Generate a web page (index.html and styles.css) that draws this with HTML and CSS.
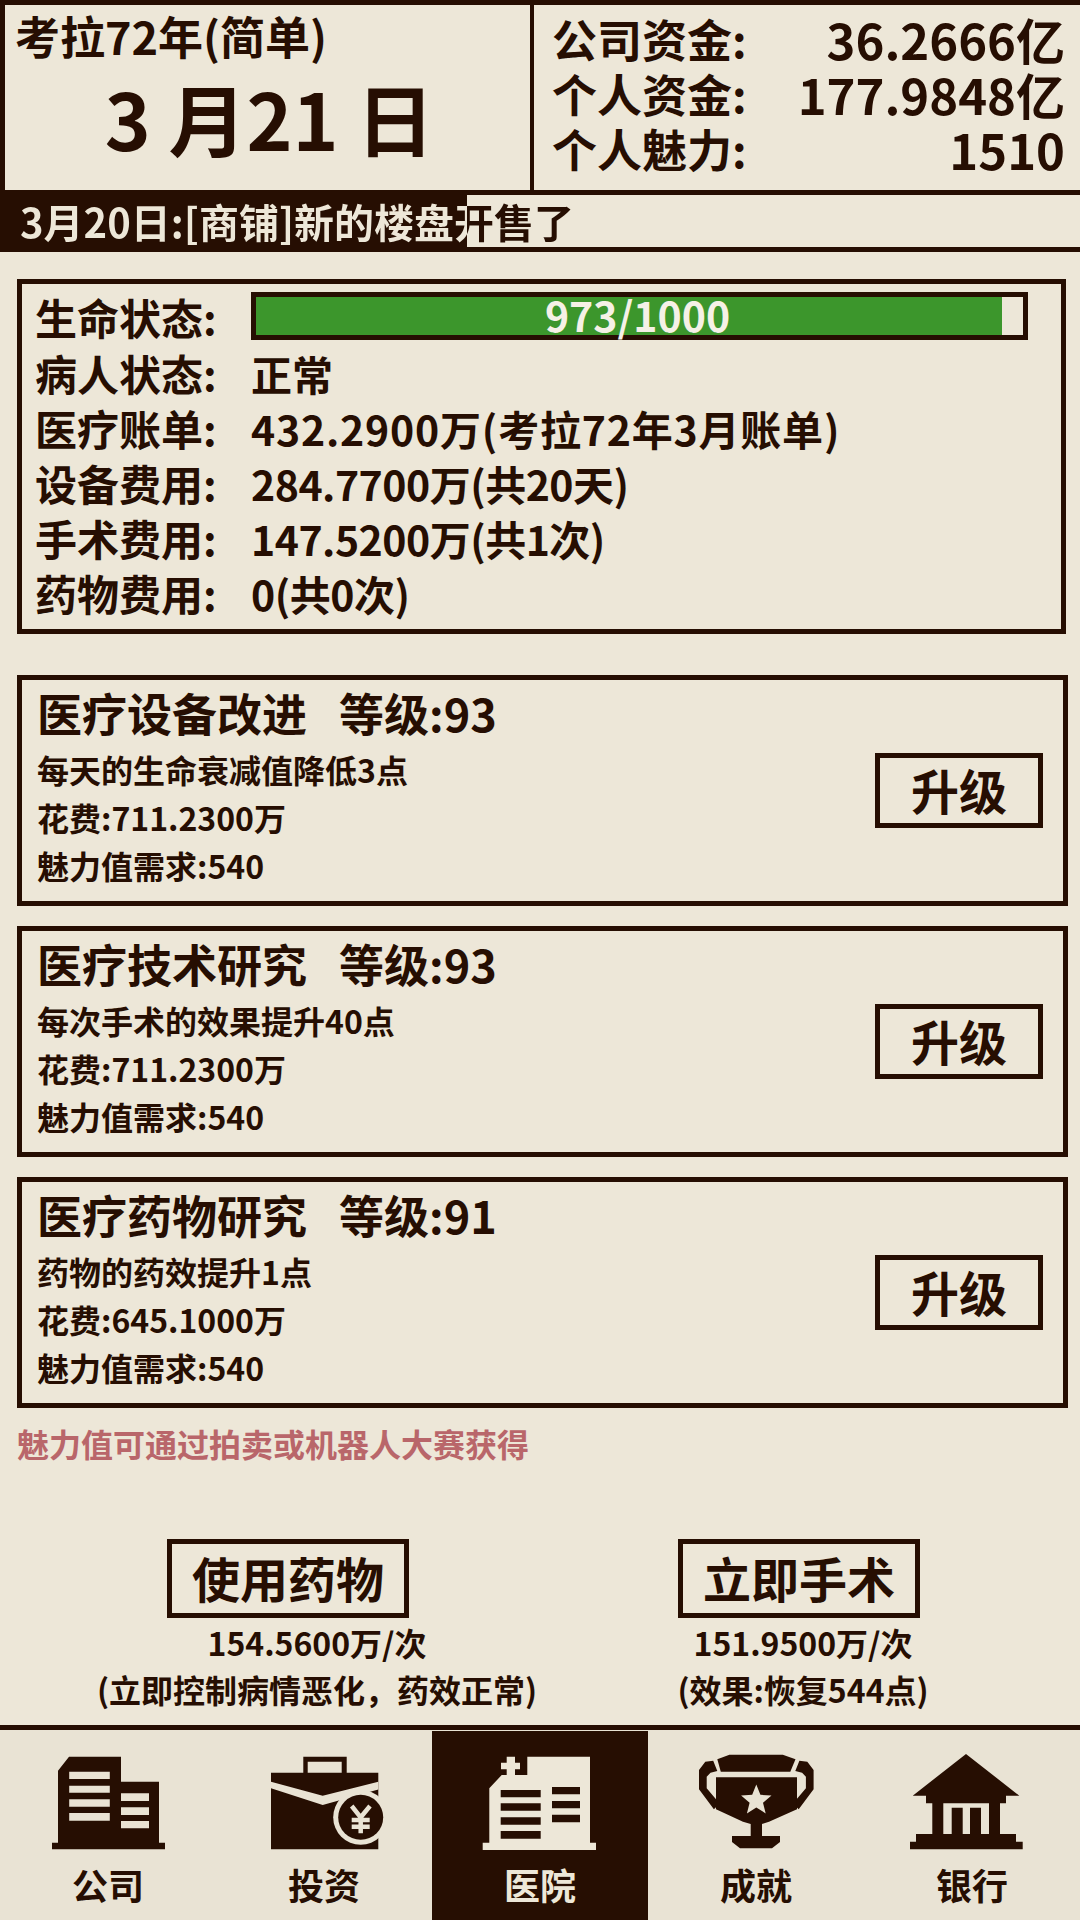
FILE: index.html
```html
<!DOCTYPE html>
<html lang="zh">
<head>
<meta charset="utf-8">
<title>医院</title>
<link rel="stylesheet" href="styles.css">
</head>
<body>
<div class="page">
  <header class="top">
    <div class="date-box">
      <div class="era">考拉72年(简单)</div>
      <div class="date">3 月21 日</div>
    </div>
    <div class="funds">
      <div class="fund"><span>公司资金:</span><span class="amount">36.2666亿</span></div>
      <div class="fund"><span>个人资金:</span><span class="amount">177.9848亿</span></div>
      <div class="fund"><span>个人魅力:</span><span class="amount">1510</span></div>
    </div>
  </header>
  <div class="ticker">
    <div class="ticker-text">3月20日:[商铺]新的楼盘开售了</div>
  </div>
  <section class="status">
    <div class="row"><span class="label">生命状态:</span>
      <div class="bar"><div class="bar-fill" style="width:97.3%"></div><span class="bar-text">973/1000</span></div></div>
    <div class="row"><span class="label">病人状态:</span><span>正常</span></div>
    <div class="row"><span class="label">医疗账单:</span><span class="wide">432.2900万(考拉72年3月账单)</span></div>
    <div class="row"><span class="label">设备费用:</span><span class="tight">284.7700万(共20天)</span></div>
    <div class="row"><span class="label">手术费用:</span><span class="tight">147.5200万(共1次)</span></div>
    <div class="row"><span class="label">药物费用:</span><span class="tight">0(共0次)</span></div>
  </section>
  <section class="cards">
    <article class="card">
      <div class="card-body">
        <h2 class="card-title"><span>医疗设备改进</span><span>等级:93</span></h2>
        <p>每天的生命衰减值降低3点</p><p>花费:711.2300万</p><p>魅力值需求:540</p>
      </div>
      <div class="btn btn-up">升级</div>
    </article>
    <article class="card">
      <div class="card-body">
        <h2 class="card-title"><span>医疗技术研究</span><span>等级:93</span></h2>
        <p>每次手术的效果提升40点</p><p>花费:711.2300万</p><p>魅力值需求:540</p>
      </div>
      <div class="btn btn-up">升级</div>
    </article>
    <article class="card">
      <div class="card-body">
        <h2 class="card-title"><span>医疗药物研究</span><span>等级:91</span></h2>
        <p>药物的药效提升1点</p><p>花费:645.1000万</p><p>魅力值需求:540</p>
      </div>
      <div class="btn btn-up">升级</div>
    </article>
  </section>
  <p class="note">魅力值可通过拍卖或机器人大赛获得</p>
  <section class="actions">
    <div class="action action-left">
      <div class="btn btn-act">使用药物</div>
      <p>154.5600万/次</p>
      <p>(立即控制病情恶化，药效正常)</p>
    </div>
    <div class="action action-right">
      <div class="btn btn-act">立即手术</div>
      <p>151.9500万/次</p>
      <p>(效果:恢复544点)</p>
    </div>
  </section>
  <nav class="nav">
    <div class="tab">
      <svg class="icon" viewBox="-6 0 132 100">
        <path fill-rule="evenodd" d="M4 92.7H10V20.7L21 6.7H73V31.7H111V92.7H117V99.3H4ZM21.2 21.7V29H61.8V21.7ZM21.2 35.7V42.7H61.8V35.7ZM21.2 49.3V56.7H61.8V49.3ZM21.2 63V70.7H61.8V63ZM73 43.3V51H101V43.3ZM73 57.3V65H101V57.3ZM73 71V78.3H101V71Z"/>
      </svg>
      <span>公司</span>
    </div>
    <div class="tab">
      <svg class="icon" viewBox="-6 0 132 100">
        <path fill-rule="evenodd" d="M39.3 22.7V6.7H82.7V22.7H114.3V99.3H7V22.7ZM43.7 11.7V22.7H77.7V11.7Z"/>
        <path class="cut" d="M7 31.7 58.7 45.7 114.3 31.7V39.5L58.7 55 7 38.3Z"/>
        <circle class="cut" cx="96.7" cy="67.3" r="27.5"/>
        <circle cx="96.7" cy="67.3" r="22.5"/>
        <path class="yen" d="M87.7 56 96.7 67.3 106 56M96.7 67.3V83.3M87.7 70H105.7M87.7 76.7H105.7"/>
      </svg>
      <span>投资</span>
    </div>
    <div class="tab tab-active">
      <svg class="icon" viewBox="-6 0 132 100">
        <path fill-rule="evenodd" d="M47.3 6.7H110V92.7H116V100H2.7V92.7H9.3V38.3L21.7 25H47.3ZM20.7 40V47.3H60.7V40ZM20.7 53.3V60.7H60.7V53.3ZM20.7 67.3V74.7H60.7V67.3ZM20.7 81V88.7H60.7V81ZM72 37V44.3H100V37ZM72 51V58.3H100V51ZM72 64.7V72.3H100V64.7Z"/>
        <path d="M26.7 6.7H35V12.7H40V19.3H35V26H26.7V19.3H21V12.7H26.7Z"/>
      </svg>
      <span>医院</span>
    </div>
    <div class="tab">
      <svg class="icon" viewBox="-6 0 132 100">
        <path d="M21.3 9.3 33.4 4.7H86.8L99.5 9.3 94.3 21.7H24.8Z"/>
        <path fill-rule="evenodd" d="M20 27.3H101V59.3L73 71.7 66 74V86H84V92L76 98.3H44L36 92V86H54.7V74L47 71.7 20 59.3ZM60.3 34.5 56.2 44.8 45.1 45.6 53.6 52.7 50.9 63.4 60.3 57.5 69.7 63.4 67 52.7 75.5 45.6 64.4 44.8Z"/>
        <path d="M9.3 11.7 17.2 10.7 21.3 21 14.5 22.7 10.7 26.7V38.3L20 49.3V57.3L17.9 59.3 3 39.3V20Z"/>
        <path d="M111.3 11.7 103.4 10.7 99.3 21 106.1 22.7 109.9 26.7V38.3L100.6 49.3V57.3L102.7 59.3 117.6 39.3V20Z"/>
      </svg>
      <span>成就</span>
    </div>
    <div class="tab">
      <svg class="icon" viewBox="-6 0 132 100">
        <path d="M54 4 107.3 45.7H94V53.3H88V84H104V91.7H110.7V99.3H-2V91.7H4V84H20.3V53.3H14V45.7H.7ZM31.3 53.3V84H39.7V57.7H50.7V84H58V57.7H69V84H77V53.3Z" fill-rule="evenodd"/>
      </svg>
      <span>银行</span>
    </div>
  </nav>
</div>
</body>
</html>
```

FILE: styles.css
```css
* { box-sizing: border-box; }
html, body { margin: 0; padding: 0; }
body {
  width: 1080px;
  height: 1920px;
  overflow: hidden;
  background: #ede7d8;
  color: #260e02;
  font-family: "Noto Sans CJK SC", "Noto Sans", sans-serif;
  font-weight: 700;
}
p, h2 { margin: 0; font: inherit; }

.page { height: 1920px; display: flex; flex-direction: column; }

.top {
  display: flex;
  height: 195px;
  border-top: 5px solid #260e02;
  border-bottom: 5px solid #260e02;
  border-left: 5px solid #260e02;
}
.date-box { width: 525px; padding-left: 10px; }
.era { font-size: 45px; line-height: 62px; }
.date { font-size: 78px; line-height: 100px; text-align: center; padding-right: 6px; }
.funds {
  flex: 1;
  border-left: 4px solid #260e02;
  padding: 6px 15px 0 18px;
}
.fund {
  display: flex;
  height: 55px;
  justify-content: space-between;
  align-items: center;
  font-size: 45px;
  line-height: 55px;
}
.amount { font-size: 49px; line-height: 55px; }

.ticker {
  height: 57px;
  border-bottom: 5px solid #260e02;
  background: linear-gradient(90deg, #260e02 467px, transparent 467px);
}
.ticker-text {
  font-size: 40px;
  line-height: 52px;
  padding-left: 20px;
  white-space: nowrap;
  background: linear-gradient(90deg, #ede7d8 467px, #260e02 467px);
  -webkit-background-clip: text;
  background-clip: text;
  color: transparent;
}

.status {
  margin: 27px 14px 0 17px;
  height: 355px;
  border: 5px solid #260e02;
  padding: 3px 0 0 13px;
  font-size: 41px;
}
.row { display: flex; align-items: center; height: 55px; }
.row:first-child { height: 58px; }
.label { width: 216px; flex: none; font-size: 42px; }
.wide { letter-spacing: .8px; }
.tight { letter-spacing: -.5px; }
.bar {
  position: relative;
  width: 777px;
  height: 48px;
  border: 5px solid #260e02;
  display: flex;
  align-items: center;
  justify-content: center;
}
.bar-fill { position: absolute; left: 0; top: 0; bottom: 0; background: #3c962c; }
.bar-text { position: relative; color: #f5f1e6; font-size: 41px; line-height: 38px; left: -2px; top: -2px; }

.cards {
  margin: 41px 12px 0 17px;
  display: flex;
  flex-direction: column;
  gap: 20px;
}
.card {
  height: 231px;
  border: 5px solid #260e02;
  padding: 1px 20px 0 15px;
  display: flex;
  justify-content: space-between;
  align-items: center;
}
.card-body { align-self: flex-start; font-size: 32px; line-height: 48px; }
.card-title { display: flex; gap: 32px; font-size: 45px; line-height: 64px; font-weight: 700; }
.btn {
  border: 5px solid #260e02;
  display: flex;
  align-items: center;
  justify-content: center;
  font-size: 48px;
  padding-bottom: 3px;
}
.btn-up { width: 168px; height: 75px; margin-bottom: 2px; }

.note { margin: 12px 0 0 17px; font-size: 32px; line-height: 46px; color: #b9666a; }

.actions { display: flex; margin-top: 73px; padding-left: 96px; }
.action { display: flex; flex-direction: column; align-items: center; font-size: 32px; line-height: 47px; }
.action-left { width: 442px; }
.action-right { margin-left: 55px; width: 420px; }
.btn-act { width: 242px; height: 79px; margin-bottom: 1px; }
.action-left .btn-act { margin-right: 58px; }
.action-right .btn-act { margin-right: 8px; }

.nav {
  margin-top: auto;
  height: 195px;
  border-top: 5px solid #260e02;
  display: flex;
  background: #e9e3d4;
}
.tab {
  width: 216px;
  margin-top: 1px;
  display: flex;
  flex-direction: column;
  align-items: center;
  padding-top: 19px;
  font-size: 36px;
  line-height: 46px;
}
.tab span { margin-top: 11px; }
.icon { width: 132px; height: 100px; fill: #260e02; display: block; overflow: visible; }
.icon .cut { fill: #e9e3d4; }
.icon .yen { fill: none; stroke: #e9e3d4; stroke-width: 4.5; }
.tab-active { background: #260e02; color: #ede7d8; }
.tab-active .icon { fill: #ede7d8; }
```
